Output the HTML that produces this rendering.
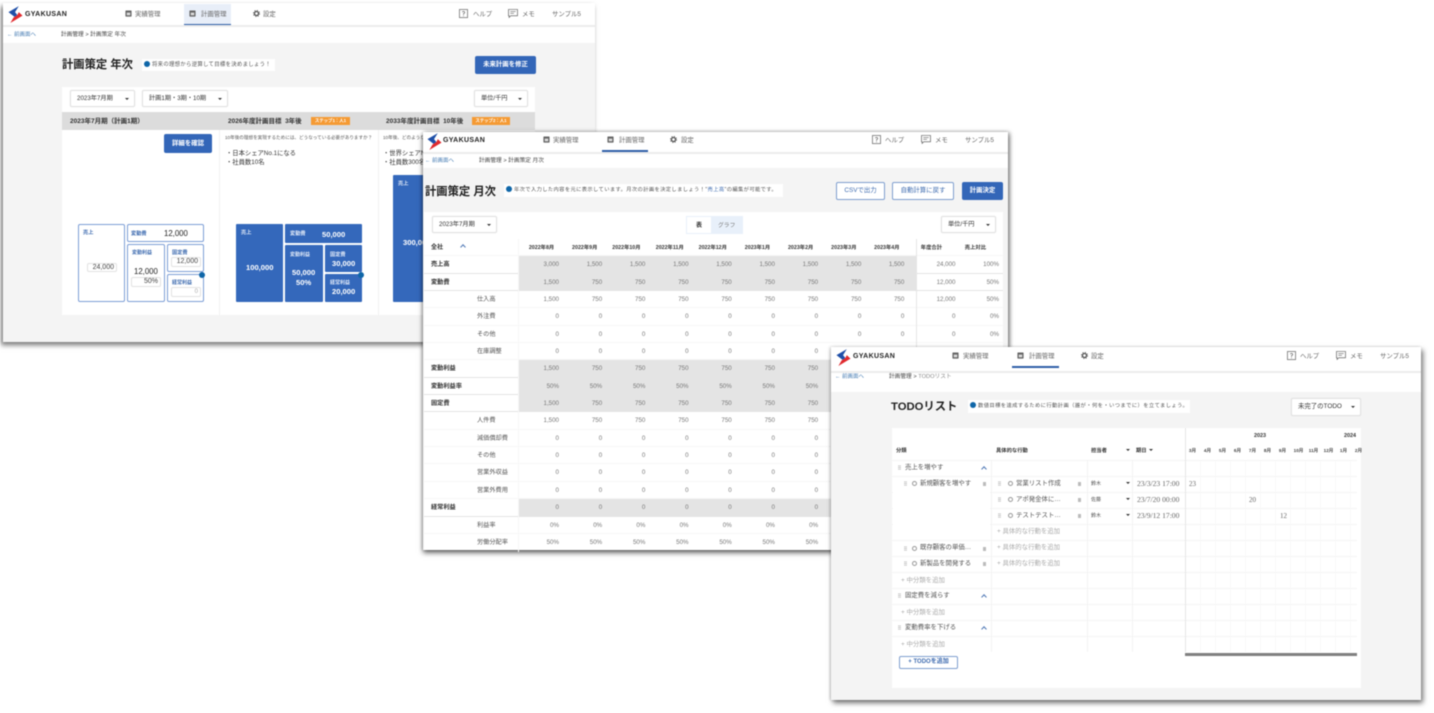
<!DOCTYPE html>
<html lang="ja"><head><meta charset="utf-8"><title>GYAKUSAN</title>
<style>
html,body{margin:0;padding:0;background:#fff;width:1434px;height:713px;overflow:hidden}
#p{position:absolute;left:0;top:0;width:1434px;height:713px;overflow:hidden;filter:blur(.45px);font-family:"Liberation Sans","Noto Sans CJK JP",sans-serif;color:#333;font-size:6px}
.a{position:absolute}
.t{position:absolute;line-height:10px;height:10px;white-space:nowrap;margin-top:1px}
.w{position:absolute;background:#f4f4f4}
.wh{position:absolute;background:#fff}
.n{font-size:6.4px;color:#666}
.bc{color:#444;font-size:5.7px}
.bk{color:#4a7fb5;font-size:5.5px}
.h1{position:absolute;white-space:nowrap;line-height:18px;height:18px;font-size:11.3px;font-weight:700;color:#222}
.tip{position:absolute;background:#fff;line-height:12px;white-space:nowrap;font-size:5.4px;color:#555;letter-spacing:.28px;padding-left:2px}
.tip b{display:inline-block;width:6px;height:6px;border-radius:50%;background:#0f66a8;vertical-align:-1px;margin-right:2px}
.btn{position:absolute;background:#3366b8;color:#fff;font-weight:700;font-size:6.4px;text-align:center;border-radius:2px;line-height:18px}
.ob{position:absolute;background:#fff;color:#3f6cb0;font-size:6.4px;text-align:center;border:1px solid #7f9fcf;border-radius:2px;box-sizing:border-box}
.s{position:absolute;background:#fff;border:1px solid #e2e2e2;border-radius:2px;box-sizing:border-box;font-size:6.2px;color:#333;line-height:15px;padding-left:6px;white-space:nowrap;box-shadow:0 0 1px #ddd}
.s i{position:absolute;right:5px;top:7px;width:0;height:0;border:2px solid transparent;border-top:2.5px solid #333;border-bottom:0}
.bd{position:absolute;background:#f59a33;color:#fff;font-size:4.4px;line-height:8px;height:8px;text-align:center;font-weight:700}
.box{position:absolute;box-sizing:border-box;border:1.6px solid #7d9fd6;border-radius:2px;background:#fff}
.bl{position:absolute;box-sizing:border-box;background:#3468bb;border-radius:1px;color:#fff}
.lb{color:#3f6cb0;font-size:5.2px;font-weight:700}
.wl{color:#dfe8f7;font-size:5.2px;font-weight:700}
.big{font-size:7.8px}
.inp{position:absolute;background:#fff;border:1px solid #e2e2e2;border-radius:2px;box-sizing:border-box;text-align:right;font-size:7px;line-height:8px;padding-right:2px;color:#444}
.wv{font-size:7.6px;color:#fff;font-weight:700}
#tb{position:absolute;left:424px;top:239px;width:579px}
.r{display:grid;grid-template-columns:48px 47px repeat(8,43.2px) 51.5px 44px 43px;height:17.35px;line-height:18.5px;box-sizing:border-box;border-bottom:1px solid #f7f7f7;background:#fff;color:#777;font-size:6.2px}
.r span{text-align:right;padding-right:3.2px;white-space:nowrap}
.r span:nth-child(1){text-align:left;padding:0 0 0 7px;font-weight:700;color:#333;font-size:6.2px}
.r span:nth-child(2){text-align:left;padding:0 0 0 5px;color:#555;font-size:6.2px;border-right:1px solid #f7f7f7}
.r span:nth-child(11){padding-right:11.7px}
.r span:nth-child(12){padding-right:4.5px;border-left:1px solid #e5e5e5}
.r span:nth-child(13){padding-right:4px}
.g{background:linear-gradient(#e4e4e4,#e4e4e4) 95px 0/397.5px 100% no-repeat #fff;border-bottom-color:#e4e4e4}
.hd{color:#333;font-size:5.3px;font-weight:700}
.hd span:nth-child(n+3){padding-right:8px}
.hd span:nth-child(11){padding-right:16.5px}
.hd span:nth-child(12){padding-right:18px}
.hd span:nth-child(13){padding-right:17px}
.td{color:#555;font-size:6.4px}
.gr{color:#aaa;font-size:6.4px}
.dr{position:absolute;width:3px;height:5px;background:radial-gradient(circle,#aaa 0 .5px,transparent .6px) 0 0/1.5px 1.7px}
.ck{position:absolute;width:5px;height:5px;border:.7px solid #999;border-radius:50%;box-sizing:border-box}
.tr{position:absolute;width:3px;height:4px;background:#bbb}
.up{position:absolute;width:4px;height:4px;border-left:1.2px solid #4f78b5;border-top:1.2px solid #4f78b5;transform:rotate(45deg);box-sizing:border-box}
.ca{position:absolute;width:0;height:0;border:2px solid transparent;border-top:2.5px solid #333;border-bottom:0}
.hh{font-weight:700;font-size:5.3px;color:#333}
.mo{font-size:4.6px;font-weight:700;color:#444;text-align:center;width:15px}
.dt{font-family:"Liberation Serif","Noto Serif CJK SC",serif;color:#666;font-size:7.6px}
.nm{font-family:"Liberation Serif",serif;color:#666;font-size:7px}
svg{position:absolute;overflow:visible}
</style></head><body><div id="p">
<svg width="0" height="0" style="left:0;top:0"><defs>
<symbol id="logo" viewBox="0 0 16 18"><path fill="#1f4fa8" d="M11.5 0 L.5 6.5 L7 11.5 L10 9.5 L7.5 6.5Z"/><path fill="#e02a2e" d="M11.5 6.5 L15.5 10.2 L2.5 18 L6 12 L10 9.5Z"/></symbol>
<symbol id="doc" viewBox="0 0 8 8"><rect x=".5" y=".5" width="7" height="7" rx=".6" fill="#666"/><rect x="2" y="3" width="4" height="3" fill="#ddd"/></symbol>
<symbol id="gear" viewBox="0 0 8 8"><circle cx="4" cy="4" r="2.3" fill="none" stroke="#555" stroke-width="1.5"/><circle cx="4" cy="4" r="3.5" fill="none" stroke="#555" stroke-width="1" stroke-dasharray="1.2 1.55"/></symbol>
<symbol id="help" viewBox="0 0 10 11"><rect x=".5" y=".5" width="9" height="9" fill="none" stroke="#666" stroke-width=".8"/><path d="M3.6 3.4 Q5 1.8 6.4 3.4 Q6.4 4.6 5 5.2 V6.4 M5 7.2 V8" fill="none" stroke="#666" stroke-width=".8"/></symbol>
<symbol id="memo" viewBox="0 0 11 10"><path d="M.5 .5 H10.5 V7.5 H3 L1.2 9.4 V7.5 H.5Z" fill="none" stroke="#666" stroke-width=".8"/><path d="M2.5 2.8 H8.5 M2.5 4.8 H6.5" stroke="#666" stroke-width=".7"/></symbol>
</defs></svg>

<!-- WINDOW 1 -->
<div class="w" style="left:3px;top:3px;width:592px;height:339px;box-shadow:-2px 3px 5px rgba(0,0,0,.55)"></div>
<div class="wh" style="left:3px;top:3px;width:592px;height:22px"></div>
<div class="a" style="left:3px;top:25px;width:592px;height:2px;background:#ececec"></div>
<div class="wh" style="left:3px;top:27px;width:592px;height:16px"></div>
<svg style="left:8px;top:6px" width="15" height="17"><use href="#logo" width="15" height="17"/></svg>
<div class="t" style="left:25px;top:9px;font-size:7px;font-weight:700;color:#222;letter-spacing:.35px">GYAKUSAN</div>
<svg style="left:125px;top:10px" width="7" height="7"><use href="#doc" width="7" height="7"/></svg><div class="t n" style="left:135px;top:9px">実績管理</div>
<div class="a" style="left:184px;top:4px;width:47px;height:21px;background:#e8eef8;border-bottom:1.5px solid #2f5fa8;box-sizing:border-box"></div>
<svg style="left:189px;top:10px" width="7" height="7"><use href="#doc" width="7" height="7"/></svg><div class="t n" style="left:201px;top:9px">計画管理</div>
<svg style="left:253px;top:10px" width="7" height="7"><use href="#gear" width="7" height="7"/></svg><div class="t n" style="left:263px;top:9px">設定</div>
<svg style="left:459px;top:9px" width="9" height="10"><use href="#help" width="9" height="10"/></svg><div class="t n" style="left:473px;top:8.5px">ヘルプ</div>
<svg style="left:508px;top:9px" width="10" height="9"><use href="#memo" width="10" height="9"/></svg><div class="t n" style="left:522px;top:8.5px">メモ</div>
<div class="t n" style="left:552px;top:8.5px">サンプル5</div>
<div class="t bk" style="left:7px;top:29px">← 前画面へ</div>
<div class="t bc" style="left:61px;top:29px">計画管理 &gt; 計画策定 年次</div>
<div class="h1" style="left:62px;top:56px">計画策定 年次</div>
<div class="tip" style="left:142px;top:59px;width:131px;height:12px">
<b></b>将来の理想から逆算して目標を決めましょう！</div>
<div class="btn" style="left:475px;top:56px;width:61px;height:18px">未来計画を修正</div>
<div class="wh" style="left:62px;top:87px;width:473px;height:228px"></div>
<div class="s" style="left:70px;top:90px;width:65px;height:17px">2023年7月期<i></i></div>
<div class="s" style="left:142px;top:90px;width:86px;height:17px">計画1期・3期・10期<i></i></div>
<div class="s" style="left:474px;top:90px;width:54px;height:17px">単位/千円<i></i></div>
<div class="a" style="left:62px;top:112px;width:473px;height:18px;background:#dcdcdc"></div>
<div class="t" style="left:70px;top:116px;font-weight:700;font-size:6.5px">2023年7月期（計画1期）</div>
<div class="t" style="left:228px;top:116px;font-weight:700;font-size:6.5px">2026年度計画目標&nbsp; 3年後</div>
<div class="bd" style="left:311px;top:117px;width:39px">ステップ1：人1</div>
<div class="t" style="left:386px;top:116px;font-weight:700;font-size:6.5px">2033年度計画目標&nbsp; 10年後</div>
<div class="bd" style="left:472px;top:117px;width:38px">ステップ2：人1</div>
<div class="a" style="left:219px;top:130px;width:1px;height:185px;background:#f2f2f2"></div>
<div class="a" style="left:378px;top:130px;width:1px;height:185px;background:#f2f2f2"></div>
<div class="btn" style="left:164px;top:134px;width:48px;height:19px;line-height:19px">詳細を確認</div>
<div class="t" style="left:225px;top:132px;font-size:4.6px;color:#555">10年後の理想を実現するためには、どうなっている必要がありますか？</div>
<div class="t" style="left:226px;top:148px;font-size:6.3px;color:#333">・日本シェアNo.1になる</div>
<div class="t" style="left:226px;top:157px;font-size:6.3px;color:#333">・社員数10名</div>
<div class="t" style="left:383px;top:132px;font-size:4.6px;color:#555">10年後、どのような姿になっていますか？</div>
<div class="t" style="left:383px;top:148px;font-size:6.3px;color:#333">・世界シェアNo.1</div>
<div class="t" style="left:383px;top:157px;font-size:6.3px;color:#333">・社員数300名</div>
<!-- outline boxes -->
<div class="box" style="left:78px;top:224px;width:47px;height:78px"></div>
<div class="t lb" style="left:83px;top:227px">売上</div>
<div class="inp" style="left:87px;top:263px;width:30px;height:9px">24,000</div>
<div class="box" style="left:127px;top:224px;width:77px;height:18px"></div>
<div class="t lb" style="left:131px;top:228px">変動費</div>
<div class="t big" style="left:164px;top:228px;color:#222">12,000</div>
<div class="box" style="left:127px;top:244px;width:38px;height:58px"></div>
<div class="t lb" style="left:132px;top:247px;font-size:5px">変動利益</div>
<div class="t big" style="left:134px;top:266px;color:#222">12,000</div>
<div class="inp" style="left:131px;top:277px;width:30px;height:10px">50%</div>
<div class="box" style="left:167px;top:244px;width:37px;height:28px"></div>
<div class="t lb" style="left:172px;top:247px">固定費</div>
<div class="inp" style="left:171px;top:257px;width:30px;height:10px">12,000</div>
<div class="box" style="left:167px;top:274px;width:37px;height:28px"></div>
<div class="t lb" style="left:172px;top:277px;font-size:5px">経常利益</div>
<div class="inp" style="left:171px;top:287px;width:30px;height:10px;color:#aaa;font-size:6px">0</div>
<div class="a" style="left:199px;top:272px;width:6px;height:6px;border-radius:50%;background:#0f66a8"></div>
<!-- filled boxes -->
<div class="bl" style="left:236px;top:224px;width:47px;height:78px"></div>
<div class="t wl" style="left:241px;top:227px">売上</div>
<div class="t wv" style="left:246px;top:262px">100,000</div>
<div class="bl" style="left:285px;top:224px;width:77px;height:19px"></div>
<div class="t wl" style="left:290px;top:228px">変動費</div>
<div class="t wv" style="left:322px;top:229px">50,000</div>
<div class="bl" style="left:285px;top:245px;width:38px;height:57px"></div>
<div class="t wl" style="left:290px;top:249px;font-size:5px">変動利益</div>
<div class="t wv" style="left:292px;top:267px">50,000</div>
<div class="t wv" style="left:296px;top:277px">50%</div>
<div class="bl" style="left:325px;top:245px;width:37px;height:27px"></div>
<div class="t wl" style="left:330px;top:249px">固定費</div>
<div class="t wv" style="left:332px;top:258px">30,000</div>
<div class="bl" style="left:325px;top:274px;width:37px;height:28px"></div>
<div class="t wl" style="left:330px;top:277px;font-size:5px">経常利益</div>
<div class="t wv" style="left:332px;top:286px">20,000</div>
<div class="a" style="left:358px;top:272px;width:6px;height:6px;border-radius:50%;background:#0f66a8"></div>
<div class="bl" style="left:393px;top:175px;width:40px;height:127px"></div>
<div class="t wl" style="left:398px;top:178px">売上</div>
<div class="t wv" style="left:403px;top:237px">300,000</div>

<!-- WINDOW 2 -->
<div class="w" style="left:423px;top:132px;width:585px;height:418px;box-shadow:0 3px 5px rgba(0,0,0,.55),2px 0 4px rgba(0,0,0,.3),-1px 0 3px rgba(0,0,0,.15)"></div>
<div class="wh" style="left:423px;top:132px;width:585px;height:20px"></div>
<div class="a" style="left:423px;top:152px;width:585px;height:2px;background:#ececec"></div>
<div class="wh" style="left:423px;top:154px;width:585px;height:14px"></div>
<svg style="left:427px;top:133px" width="15" height="17"><use href="#logo" width="15" height="17"/></svg>
<div class="t" style="left:443px;top:135px;font-size:7px;font-weight:700;color:#222;letter-spacing:.35px">GYAKUSAN</div>
<svg style="left:543px;top:136px" width="7" height="7"><use href="#doc" width="7" height="7"/></svg><div class="t n" style="left:553px;top:135px">実績管理</div>
<div class="a" style="left:602px;top:150px;width:46px;height:1.5px;background:#2f5fa8"></div>
<svg style="left:607px;top:136px" width="7" height="7"><use href="#doc" width="7" height="7"/></svg><div class="t n" style="left:619px;top:135px">計画管理</div>
<svg style="left:670px;top:136px" width="7" height="7"><use href="#gear" width="7" height="7"/></svg><div class="t n" style="left:681px;top:135px">設定</div>
<svg style="left:872px;top:135px" width="9" height="10"><use href="#help" width="9" height="10"/></svg><div class="t n" style="left:885px;top:135px">ヘルプ</div>
<svg style="left:921px;top:135px" width="10" height="9"><use href="#memo" width="10" height="9"/></svg><div class="t n" style="left:935px;top:135px">メモ</div>
<div class="t n" style="left:965px;top:135px">サンプル5</div>
<div class="t bk" style="left:425px;top:155px">← 前画面へ</div>
<div class="t bc" style="left:479px;top:155px">計画管理 &gt; 計画策定 月次</div>
<div class="h1" style="left:425px;top:183px">計画策定 月次</div>
<div class="tip" style="left:504px;top:184px;width:277px;height:13px;letter-spacing:.35px;font-size:5.3px"><b></b>年次で入力した内容を元に表示しています。月次の計画を決定しましょう！"<span style="color:#3f6cb0">売上高</span>"の編集が可能です。</div>
<div class="ob" style="left:836px;top:182px;width:49px;height:18px;line-height:16px">CSVで出力</div>
<div class="ob" style="left:892px;top:182px;width:62px;height:18px;line-height:16px">自動計算に戻す</div>
<div class="btn" style="left:962px;top:182px;width:41px;height:18px">計画決定</div>
<div class="wh" style="left:424px;top:212px;width:579px;height:338px"></div>
<div class="s" style="left:432px;top:216px;width:65px;height:17px">2023年7月期<i></i></div>
<div class="a" style="left:686px;top:216px;width:57px;height:18px;background:#e8f0fa"></div>
<div class="a" style="left:687px;top:217px;width:24px;height:16px;background:#fff"></div>
<div class="t" style="left:696px;top:220px;font-weight:700;font-size:6px">表</div>
<div class="t" style="left:718px;top:220px;font-size:5.8px;color:#777">グラフ</div>
<div class="s" style="left:941px;top:216px;width:55px;height:17px">単位/千円<i></i></div>
<div id="tb">
<div class="r hd"><span style="font-size:6px">全社</span><span></span><span>2022年8月</span><span>2022年9月</span><span>2022年10月</span><span>2022年11月</span><span>2022年12月</span><span>2023年1月</span><span>2023年2月</span><span>2023年3月</span><span>2023年4月</span><span>年度合計</span><span>売上対比</span></div>
<div class="r g"><span>売上高</span><span></span><span>3,000</span><span>1,500</span><span>1,500</span><span>1,500</span><span>1,500</span><span>1,500</span><span>1,500</span><span>1,500</span><span>1,500</span><span>24,000</span><span>100%</span></div>
<div class="r g"><span>変動費</span><span></span><span>1,500</span><span>750</span><span>750</span><span>750</span><span>750</span><span>750</span><span>750</span><span>750</span><span>750</span><span>12,000</span><span>50%</span></div>
<div class="r"><span></span><span>仕入高</span><span>1,500</span><span>750</span><span>750</span><span>750</span><span>750</span><span>750</span><span>750</span><span>750</span><span>750</span><span>12,000</span><span>50%</span></div>
<div class="r"><span></span><span>外注費</span><span>0</span><span>0</span><span>0</span><span>0</span><span>0</span><span>0</span><span>0</span><span>0</span><span>0</span><span>0</span><span>0%</span></div>
<div class="r"><span></span><span>その他</span><span>0</span><span>0</span><span>0</span><span>0</span><span>0</span><span>0</span><span>0</span><span>0</span><span>0</span><span>0</span><span>0%</span></div>
<div class="r"><span></span><span>在庫調整</span><span>0</span><span>0</span><span>0</span><span>0</span><span>0</span><span>0</span><span>0</span><span>0</span><span>0</span><span>0</span><span>0%</span></div>
<div class="r g"><span>変動利益</span><span></span><span>1,500</span><span>750</span><span>750</span><span>750</span><span>750</span><span>750</span><span>750</span><span>750</span><span>750</span><span>12,000</span><span>50%</span></div>
<div class="r g"><span>変動利益率</span><span></span><span>50%</span><span>50%</span><span>50%</span><span>50%</span><span>50%</span><span>50%</span><span>50%</span><span>50%</span><span>50%</span><span>50%</span><span></span></div>
<div class="r g"><span>固定費</span><span></span><span>1,500</span><span>750</span><span>750</span><span>750</span><span>750</span><span>750</span><span>750</span><span>750</span><span>750</span><span>12,000</span><span>50%</span></div>
<div class="r"><span></span><span>人件費</span><span>1,500</span><span>750</span><span>750</span><span>750</span><span>750</span><span>750</span><span>750</span><span>750</span><span>750</span><span>12,000</span><span>50%</span></div>
<div class="r"><span></span><span>減価償却費</span><span>0</span><span>0</span><span>0</span><span>0</span><span>0</span><span>0</span><span>0</span><span>0</span><span>0</span><span>0</span><span>0%</span></div>
<div class="r"><span></span><span>その他</span><span>0</span><span>0</span><span>0</span><span>0</span><span>0</span><span>0</span><span>0</span><span>0</span><span>0</span><span>0</span><span>0%</span></div>
<div class="r"><span></span><span>営業外収益</span><span>0</span><span>0</span><span>0</span><span>0</span><span>0</span><span>0</span><span>0</span><span>0</span><span>0</span><span>0</span><span>0%</span></div>
<div class="r"><span></span><span>営業外費用</span><span>0</span><span>0</span><span>0</span><span>0</span><span>0</span><span>0</span><span>0</span><span>0</span><span>0</span><span>0</span><span>0%</span></div>
<div class="r g"><span>経常利益</span><span></span><span>0</span><span>0</span><span>0</span><span>0</span><span>0</span><span>0</span><span>0</span><span>0</span><span>0</span><span>0</span><span>0%</span></div>
<div class="r"><span></span><span>利益率</span><span>0%</span><span>0%</span><span>0%</span><span>0%</span><span>0%</span><span>0%</span><span>0%</span><span>0%</span><span>0%</span><span>0%</span><span></span></div>
<div class="r" style="border-bottom:0;height:14px"><span></span><span>労働分配率</span><span>50%</span><span>50%</span><span>50%</span><span>50%</span><span>50%</span><span>50%</span><span>50%</span><span>50%</span><span>50%</span><span>50%</span><span></span></div>
</div>
<div class="up" style="left:461px;top:245px"></div>

<!-- WINDOW 3 -->
<div class="w" style="left:831px;top:347px;width:590px;height:353px;box-shadow:2px 3px 5px rgba(0,0,0,.55),-1px 0 3px rgba(0,0,0,.2)"></div>
<div class="wh" style="left:831px;top:347px;width:590px;height:24px"></div>
<div class="a" style="left:831px;top:371px;width:590px;height:2px;background:#ececec"></div>
<div class="wh" style="left:831px;top:373px;width:590px;height:19px"></div>
<svg style="left:836px;top:349px" width="15" height="17"><use href="#logo" width="15" height="17"/></svg>
<div class="t" style="left:853px;top:351px;font-size:7px;font-weight:700;color:#222;letter-spacing:.35px">GYAKUSAN</div>
<svg style="left:952px;top:352px" width="7" height="7"><use href="#doc" width="7" height="7"/></svg><div class="t n" style="left:963px;top:351px">実績管理</div>
<div class="a" style="left:1012px;top:366px;width:47px;height:1.5px;background:#2f5fa8"></div>
<svg style="left:1017px;top:352px" width="7" height="7"><use href="#doc" width="7" height="7"/></svg><div class="t n" style="left:1029px;top:351px">計画管理</div>
<svg style="left:1081px;top:352px" width="7" height="7"><use href="#gear" width="7" height="7"/></svg><div class="t n" style="left:1091px;top:351px">設定</div>
<svg style="left:1287px;top:351px" width="9" height="10"><use href="#help" width="9" height="10"/></svg><div class="t n" style="left:1300px;top:351px">ヘルプ</div>
<svg style="left:1336px;top:351px" width="10" height="9"><use href="#memo" width="10" height="9"/></svg><div class="t n" style="left:1350px;top:351px">メモ</div>
<div class="t n" style="left:1380px;top:351px">サンプル5</div>
<div class="t bk" style="left:835px;top:371px">← 前画面へ</div>
<div class="t bc" style="left:889px;top:371px">計画管理 &gt; <span style="color:#888">TODOリスト</span></div>
<div class="h1" style="left:891px;top:398px">TODOリスト</div>
<div class="tip" style="left:968px;top:400px;width:220px;height:13px;letter-spacing:.4px;font-size:5.3px"><b></b>数値目標を達成するために行動計画（誰が・何を・いつまでに）を立てましょう。</div>
<div class="s" style="left:1291px;top:398px;width:70px;height:18px;font-weight:400;padding-left:6px;line-height:16px;font-size:6.4px">未完了のTODO<i></i></div>
<div class="wh" style="left:892px;top:428px;width:469px;height:260px"></div>
<div class="a" style="left:892px;top:459.5px;width:465px;height:192px;background:repeating-linear-gradient(to bottom,#f4f4f4 0,#f4f4f4 .8px,transparent .8px,transparent 16px)"></div>
<div class="a" style="left:1185px;top:460px;width:172px;height:192px;background:repeating-linear-gradient(to right,#f8f8f8 0,#f8f8f8 .8px,transparent .8px,transparent 15px)"></div>
<div class="wh" style="left:893px;top:476.5px;width:97px;height:62px"></div>
<div class="a" style="left:991px;top:460px;width:1px;height:192px;background:#f3f3f3"></div>
<div class="a" style="left:1087px;top:460px;width:1px;height:192px;background:#f3f3f3"></div>
<div class="a" style="left:1132px;top:460px;width:1px;height:192px;background:#f3f3f3"></div>
<div class="a" style="left:1185px;top:428px;width:1px;height:224px;background:#e6e6e6"></div>
<div class="t hh" style="left:896px;top:445px">分類</div>
<div class="t hh" style="left:996px;top:445px">具体的な行動</div>
<div class="t hh" style="left:1091px;top:445px">担当者</div>
<div class="ca" style="left:1126px;top:449px"></div>
<div class="t hh" style="left:1136px;top:445px">期日</div>
<div class="ca" style="left:1149px;top:449px"></div>
<div class="t hh" style="left:1254px;top:430px;font-size:5.4px">2023</div>
<div class="t hh" style="left:1344px;top:430px;font-size:5.4px">2024</div>
<div class="t mo" style="left:1185px;top:445px">3月</div><div class="t mo" style="left:1200px;top:445px">4月</div><div class="t mo" style="left:1215px;top:445px">5月</div><div class="t mo" style="left:1230px;top:445px">6月</div><div class="t mo" style="left:1245px;top:445px">7月</div><div class="t mo" style="left:1260px;top:445px">8月</div><div class="t mo" style="left:1275px;top:445px">9月</div><div class="t mo" style="left:1291px;top:445px">10月</div><div class="t mo" style="left:1306px;top:445px">11月</div><div class="t mo" style="left:1321px;top:445px">12月</div><div class="t mo" style="left:1336px;top:445px">1月</div><div class="t mo" style="left:1351px;top:445px">2月</div>

<div class="dr" style="left:898px;top:465px"></div><div class="t td" style="left:905px;top:462px">売上を増やす</div><div class="up" style="left:982px;top:467px"></div>
<div class="dr" style="left:904px;top:481px"></div><div class="ck" style="left:912px;top:481px"></div><div class="t td" style="left:920px;top:478px">新規顧客を増やす</div><div class="tr" style="left:983px;top:482px"></div>
<div class="dr" style="left:998px;top:481px"></div><div class="ck" style="left:1008px;top:481px"></div><div class="t td" style="left:1016px;top:478px">営業リスト作成</div><div class="tr" style="left:1078px;top:482px"></div>
<div class="t" style="left:1091px;top:478px;font-size:5px;color:#555">鈴木</div><div class="ca" style="left:1126px;top:482px"></div><div class="t dt" style="left:1137px;top:478px">23/3/23 17:00</div><div class="t nm" style="left:1189px;top:478px">23</div>
<div class="dr" style="left:998px;top:497px"></div><div class="ck" style="left:1008px;top:497px"></div><div class="t td" style="left:1016px;top:494px">アポ発金体に…</div><div class="tr" style="left:1078px;top:498px"></div>
<div class="t" style="left:1091px;top:494px;font-size:5px;color:#555">佐藤</div><div class="ca" style="left:1126px;top:498px"></div><div class="t dt" style="left:1137px;top:494px">23/7/20 00:00</div><div class="t nm" style="left:1249px;top:494px">20</div>
<div class="dr" style="left:998px;top:513px"></div><div class="ck" style="left:1008px;top:513px"></div><div class="t td" style="left:1016px;top:510px">テストテスト…</div><div class="tr" style="left:1078px;top:514px"></div>
<div class="t" style="left:1091px;top:510px;font-size:5px;color:#555">鈴木</div><div class="ca" style="left:1126px;top:514px"></div><div class="t dt" style="left:1137px;top:510px">23/9/12 17:00</div><div class="t nm" style="left:1280px;top:510px">12</div>
<div class="t gr" style="left:997px;top:526px">+ 具体的な行動を追加</div>
<div class="dr" style="left:904px;top:546px"></div><div class="ck" style="left:912px;top:546px"></div><div class="t td" style="left:920px;top:542px">既存顧客の単価…</div><div class="tr" style="left:983px;top:547px"></div>
<div class="t gr" style="left:997px;top:542px">+ 具体的な行動を追加</div>
<div class="dr" style="left:904px;top:561px"></div><div class="ck" style="left:912px;top:561px"></div><div class="t td" style="left:920px;top:558px">新製品を開発する</div><div class="tr" style="left:983px;top:562px"></div>
<div class="t gr" style="left:997px;top:558px">+ 具体的な行動を追加</div>
<div class="t gr" style="left:901px;top:575px">+ 中分類を追加</div>
<div class="dr" style="left:898px;top:593px"></div><div class="t td" style="left:905px;top:590px">固定費を減らす</div><div class="up" style="left:982px;top:595px"></div>
<div class="t gr" style="left:901px;top:607px">+ 中分類を追加</div>
<div class="dr" style="left:898px;top:625px"></div><div class="t td" style="left:905px;top:622px">変動費率を下げる</div><div class="up" style="left:982px;top:627px"></div>
<div class="t gr" style="left:901px;top:639px">+ 中分類を追加</div>
<div class="a" style="left:1185px;top:653px;width:172px;height:2.5px;background:#808080"></div>
<div class="ob" style="left:899px;top:656px;width:59px;height:13px;line-height:11px;font-weight:700;font-size:6px">+ TODOを追加</div>
</div></body></html>
